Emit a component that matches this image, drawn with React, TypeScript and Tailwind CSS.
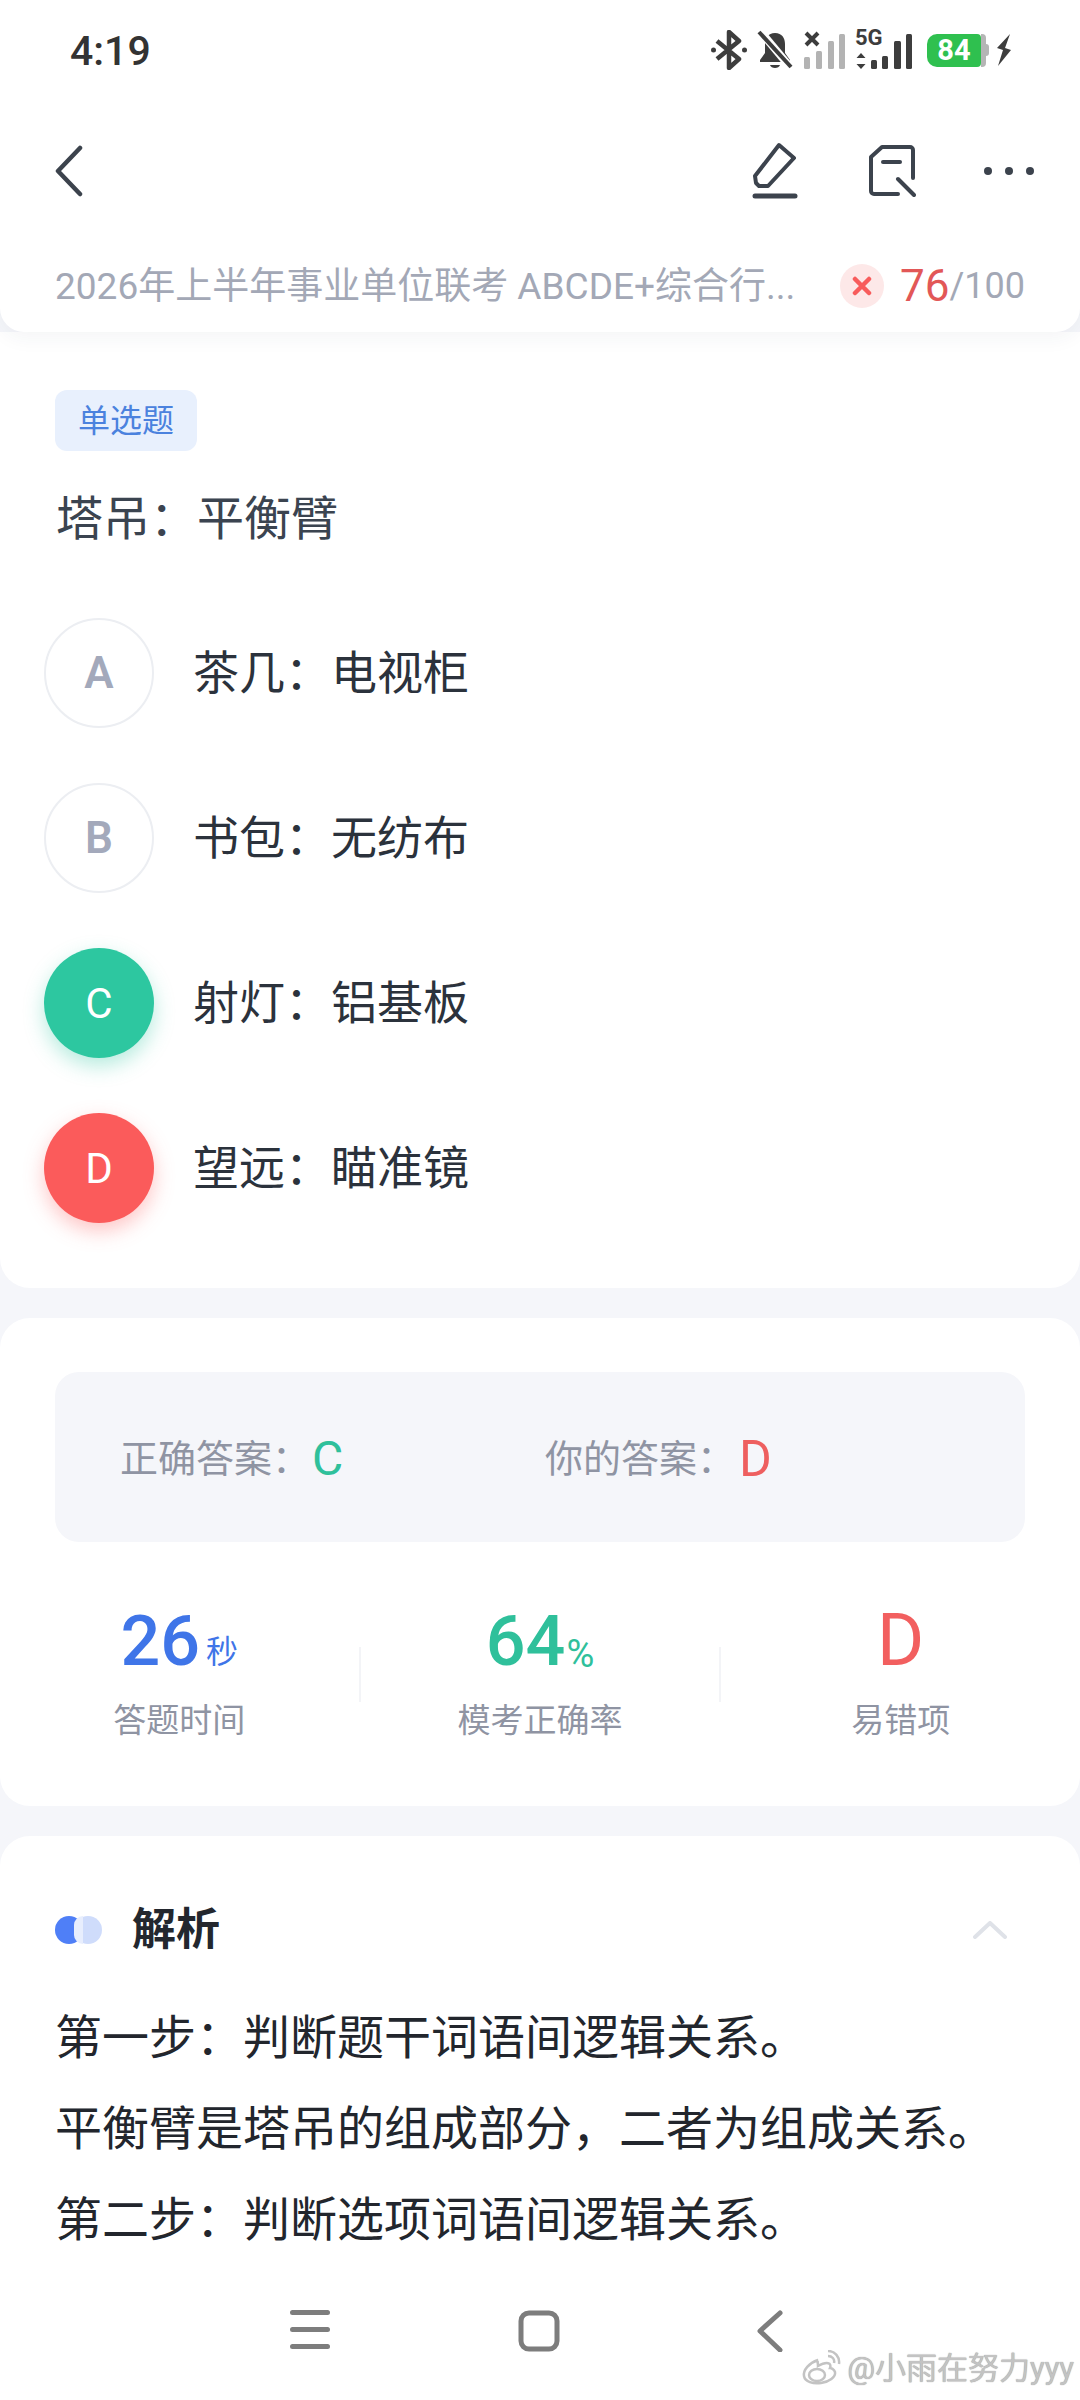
import React from 'react';

const options = [
  { key: 'A', text: '茶几：电视柜', state: 'idle' },
  { key: 'B', text: '书包：无纺布', state: 'idle' },
  { key: 'C', text: '射灯：铝基板', state: 'right' },
  { key: 'D', text: '望远：瞄准镜', state: 'wrong' },
];

const StatusIcons: React.FC = () => (
  <div className="flex items-center text-[#3d3d3d]">
    {/* bluetooth */}
    <svg width="36" height="40" viewBox="0 0 36 40" fill="none" stroke="currentColor" strokeWidth="4.5" strokeLinejoin="round">
      <path d="M6 11l22 18-10 9V2l10 9L6 29" />
      <circle cx="2.5" cy="20" r="2.5" fill="currentColor" stroke="none" />
      <circle cx="33.5" cy="20" r="2.5" fill="currentColor" stroke="none" />
    </svg>
    {/* muted bell */}
    <svg className="ml-[10px]" width="36" height="40" viewBox="0 0 36 40" fill="none">
      <path d="M18 3c7 0 10 5 10 11v9l5 7v2H3v-2l5-7v-9C8 8 11 3 18 3z" fill="currentColor" />
      <path d="M13 35h10c-1 4-9 4-10 0z" fill="currentColor" />
      <path d="M3 1l31 37" stroke="#ffffff" strokeWidth="8" />
      <path d="M2 2l32 35" stroke="currentColor" strokeWidth="4" />
    </svg>
    {/* sim 1, no service */}
    <svg className="ml-[11px]" width="42" height="38" viewBox="0 0 42 38" fill="none">
      <path d="M2 2l12 12M14 2L2 14" stroke="currentColor" strokeWidth="4" />
      <rect x="0" y="26" width="6" height="12" rx="1.5" fill="#b3b3b3" />
      <rect x="12" y="20" width="6" height="18" rx="1.5" fill="#b3b3b3" />
      <rect x="24" y="10" width="6" height="28" rx="1.5" fill="#b3b3b3" />
      <rect x="35" y="3" width="6" height="35" rx="1.5" fill="#b3b3b3" />
    </svg>
    {/* sim 2, 5G */}
    <div className="relative ml-[9px] h-[38px] w-[58px]">
      <span className="absolute left-0 top-[-3px] text-[22px] font-bold leading-[20px] font-['Roboto',sans-serif]">5G</span>
      <svg className="absolute left-0 top-0" width="58" height="38" viewBox="0 0 58 38" fill="currentColor">
        <path d="M6 22l4.500 5h-9zM6 38l4.500-5h-9z" />
        <rect x="16" y="29" width="6" height="9" rx="1.5" />
        <rect x="27" y="25" width="6" height="13" rx="1.500" />
        <rect x="39" y="10" width="7" height="28" rx="1.500" />
        <rect x="51" y="3" width="6" height="35" rx="1.500" />
      </svg>
    </div>
    {/* battery */}
    <div className="ml-[14px] flex items-center">
      <div className="flex h-[33px] w-[54px] items-center justify-center rounded-l-[10px] rounded-r-[4px] bg-[#2fc04f] text-[29px] font-bold leading-none text-white font-['Roboto',sans-serif]">
        84
      </div>
      <div className="h-[33px] w-[5px] rounded-r-[4px] bg-[#b5b5b5]" />
      <div className="h-[12px] w-[3px] rounded-r-[3px] bg-[#b5b5b5]" />
    </div>
    <svg className="ml-[7px]" width="16" height="32" viewBox="0 0 16 32" fill="currentColor">
      <path d="M14 0L1 14l6 2-5 16 13-16-6-2z" />
    </svg>
  </div>
);

const Stat: React.FC<{ value: string; unit?: string; label: string; color: string; unitClass?: string; valueClass?: string }> = ({
  value,
  unit,
  label,
  color,
  unitClass,
  valueClass,
}) => (
  <div className="flex flex-1 flex-col items-center">
    <div className={`flex h-[74px] items-end ${color}`}>
      <span className={valueClass}>{value}</span>
      {unit && <span className={unitClass}>{unit}</span>}
    </div>
    <div className="mt-[21px] text-[33px] leading-[44px] text-[#8f94a3]">{label}</div>
  </div>
);

const App: React.FC = () => {
  return (
    <div className="relative flex h-[2400px] w-[1080px] flex-col overflow-hidden bg-[#f5f6fa] font-['Roboto','Noto_Sans_CJK_SC',sans-serif]">
      {/* header */}
      <div className="relative z-10 h-[332px] rounded-b-[24px] bg-white shadow-[0_6px_20px_rgba(40,50,80,0.05)]">
        <div className="flex h-[100px] items-center justify-between pl-[70px] pr-[68px]">
          <span className="pt-[2px] text-[41px] font-medium leading-none text-[#333333]">4:19</span>
          <StatusIcons />
        </div>
        <div className="flex h-[142px] items-center justify-between pl-[55px] pr-[46px]">
          <svg width="28" height="52" viewBox="0 0 28 52" fill="none" stroke="#3c434d" strokeWidth="4.5" strokeLinecap="round" strokeLinejoin="round">
            <path d="M25 3L3 26l22 23" />
          </svg>
          <div className="flex items-center">
            <svg width="46" height="58" viewBox="0 0 46 58" fill="none" stroke="#3c434d" strokeLinecap="round" strokeLinejoin="round">
              <path d="M27 3l15 13-26 28H7l-3-3-1-7z" strokeWidth="4" />
              <path d="M3 54h40" strokeWidth="5" />
            </svg>
            <svg className="ml-[70px]" width="48" height="54" viewBox="0 0 48 54" fill="none" stroke="#3c434d" strokeWidth="4" strokeLinecap="round" strokeLinejoin="round">
              <path d="M45 34V6a3 3 0 0 0-3-3H14L3 13v34a3 3 0 0 0 3 3h24" />
              <path d="M15 18h17" />
              <path d="M30 35l16 16" />
            </svg>
            <div className="ml-[68px] flex gap-[13px]">
              <div className="h-[8px] w-[8px] rounded-full bg-[#3c434d]" />
              <div className="h-[8px] w-[8px] rounded-full bg-[#3c434d]" />
              <div className="h-[8px] w-[8px] rounded-full bg-[#3c434d]" />
            </div>
          </div>
        </div>
        <div className="flex h-[90px] items-center justify-between pl-[55px] pr-[55px] pb-[2px]">
          <span className="text-[37px] leading-none text-[#a3a8b6]">2026年上半年事业单位联考 ABCDE+综合行...</span>
          <div className="flex items-center">
            <div className="flex h-[44px] w-[44px] items-center justify-center rounded-full bg-[#fde8e8]">
              <svg width="20" height="20" viewBox="0 0 20 20" fill="none" stroke="#f85c5c" strokeWidth="4.5" strokeLinecap="round">
                <path d="M3 3l14 14M17 3L3 17" />
              </svg>
            </div>
            <span className="ml-[16px] text-[44px] leading-none text-[#e25757]">76</span>
            <span className="text-[36px] leading-none text-[#a3a8b6]">/100</span>
          </div>
        </div>
      </div>

      {/* question */}
      <div className="h-[956px] rounded-b-[30px] bg-white pt-[58px]">
        <div className="ml-[55px] flex h-[61px] w-[142px] items-center justify-center rounded-[12px] bg-[#e8f0fd] text-[32px] text-[#4b82de]">
          单选题
        </div>
        <div className="ml-[56px] mt-[36px] text-[47px] leading-[64px] text-[#3b4450]">塔吊：平衡臂</div>
        <div className="mt-[67px] flex flex-col gap-[55px] pl-[44px]">
          {options.map((o) => (
            <div key={o.key} className="flex items-center">
              {o.state === 'idle' && (
                <div className="flex h-[110px] w-[110px] items-center justify-center rounded-full border-2 border-[#eceef2] text-[44px] font-semibold text-[#a3a9bb]">
                  {o.key}
                </div>
              )}
              {o.state === 'right' && (
                <div className="flex h-[110px] w-[110px] items-center justify-center rounded-full bg-[#2dc7a0] text-[42px] text-white shadow-[0_8px_20px_rgba(45,199,160,0.35)]">
                  {o.key}
                </div>
              )}
              {o.state === 'wrong' && (
                <div className="flex h-[110px] w-[110px] items-center justify-center rounded-full bg-[#fb5b5b] text-[42px] text-white shadow-[0_8px_20px_rgba(251,91,91,0.35)]">
                  {o.key}
                </div>
              )}
              <span className="ml-[39px] text-[46px] leading-[64px] text-[#2b323c]">{o.text}</span>
            </div>
          ))}
        </div>
      </div>

      {/* answer */}
      <div className="mt-[30px] h-[488px] rounded-[30px] bg-white px-[55px] pt-[54px]">
        <div className="flex h-[170px] items-center rounded-[24px] bg-[#f5f6fa] pt-[3px] pl-[65px]">
          <div className="flex w-[425px] items-center">
            <span className="text-[38px] leading-none text-[#8f94a3]">正确答案：</span>
            <span className="ml-[2px] text-[48px] leading-none text-[#2fc09b]">C</span>
          </div>
          <div className="flex items-center">
            <span className="text-[38px] leading-none text-[#8f94a3]">你的答案：</span>
            <span className="ml-[4px] text-[50px] leading-none text-[#ee5f5f]">D</span>
          </div>
        </div>
        <div className="relative mx-[-55px] mt-[62px] flex">
          <Stat value="26" unit="秒" label="答题时间" color="text-[#3f75e8]" valueClass="text-[70px] font-medium leading-[74px]" unitClass="mb-[4px] ml-[6px] text-[32px] leading-[44px]" />
          <div className="mt-[43px] h-[55px] w-[2px] bg-[#f3f4f7]" />
          <Stat value="64" unit="%" label="模考正确率" color="text-[#2fc09b]" valueClass="text-[70px] font-medium leading-[74px]" unitClass="mb-[4px] ml-[1px] text-[38px] leading-[40px]" />
          <div className="mt-[43px] h-[55px] w-[2px] bg-[#f3f4f7]" />
          <Stat value="D" label="易错项" color="text-[#f25f5f]" valueClass="text-[72px] leading-[74px]" />
        </div>
      </div>

      {/* analysis */}
      <div className="mt-[30px] flex-1 rounded-t-[30px] bg-white px-[55px] pt-[64px]">
        <div className="flex h-[60px] items-center">
          <div className="relative h-[28px] w-[47px]">
            <div className="absolute left-[19px] top-0 h-[28px] w-[28px] rounded-full bg-[#cfdcfb]" />
            <div className="absolute left-0 top-0 h-[28px] w-[28px] rounded-full bg-[#4f7ff7]" />
            <div className="absolute left-[19px] top-0 h-[28px] w-[9px] rounded-l-full bg-[#e8eefd]" />
          </div>
          <span className="ml-[30px] text-[44px] font-semibold leading-none text-[#23272e]">解析</span>
          <svg className="ml-auto mr-[18px]" width="34" height="18" viewBox="0 0 34 18" fill="none" stroke="#dfe2e8" strokeWidth="4" strokeLinecap="round" strokeLinejoin="round">
            <path d="M2 16L17 2l15 14" />
          </svg>
        </div>
        <div className="mt-[32px] text-[47px] leading-[91px] text-[#22262d]">
          <div>第一步：判断题干词语间逻辑关系。</div>
          <div>平衡臂是塔吊的组成部分，二者为组成关系。</div>
          <div>第二步：判断选项词语间逻辑关系。</div>
        </div>
      </div>

      {/* nav bar */}
      <div className="absolute bottom-0 left-0 flex h-[130px] w-full items-start bg-white pl-[290px] pt-[40px]">
        <svg width="40" height="40" viewBox="0 0 40 40" fill="#7d7d7d">
          <rect x="0" y="0" width="40" height="5" rx="2.5" />
          <rect x="0" y="17" width="40" height="5" rx="2.500" />
          <rect x="0" y="34" width="40" height="5" rx="2.500" />
        </svg>
        <svg className="ml-[188px]" width="42" height="42" viewBox="0 0 42 42" fill="none" stroke="#7d7d7d" strokeWidth="5">
          <rect x="3" y="3" width="36" height="36" rx="8" />
        </svg>
        <svg className="ml-[196px]" width="28" height="42" viewBox="0 0 28 42" fill="none" stroke="#7d7d7d" strokeWidth="5" strokeLinecap="round" strokeLinejoin="round">
          <path d="M24 3L4 21l20 19" />
        </svg>
      </div>

      {/* weibo watermark */}
      <div className="absolute bottom-[14px] right-[6px] flex items-center text-[#c3c3c3]">
        <svg width="40" height="36" viewBox="0 0 40 36" fill="none" stroke="currentColor" strokeWidth="2.500">
          <path d="M17 10C8 13 2 20 3 26c1 6 9 8 17 7s15-6 14-11c-1-3-4-4-5-4 2-5-3-7-12-2 0-3-1-6 0-6z" />
          <ellipse cx="16" cy="25" rx="8" ry="6" />
          <path d="M27 6c4 0 7 3 6 7M27 1c7 0 12 6 11 13" />
        </svg>
        <span className="ml-[6px] text-[31px] leading-none [text-shadow:0_0_1px_#8a8a8a]">@小雨在努力yyy</span>
      </div>
    </div>
  );
};

export default App;
